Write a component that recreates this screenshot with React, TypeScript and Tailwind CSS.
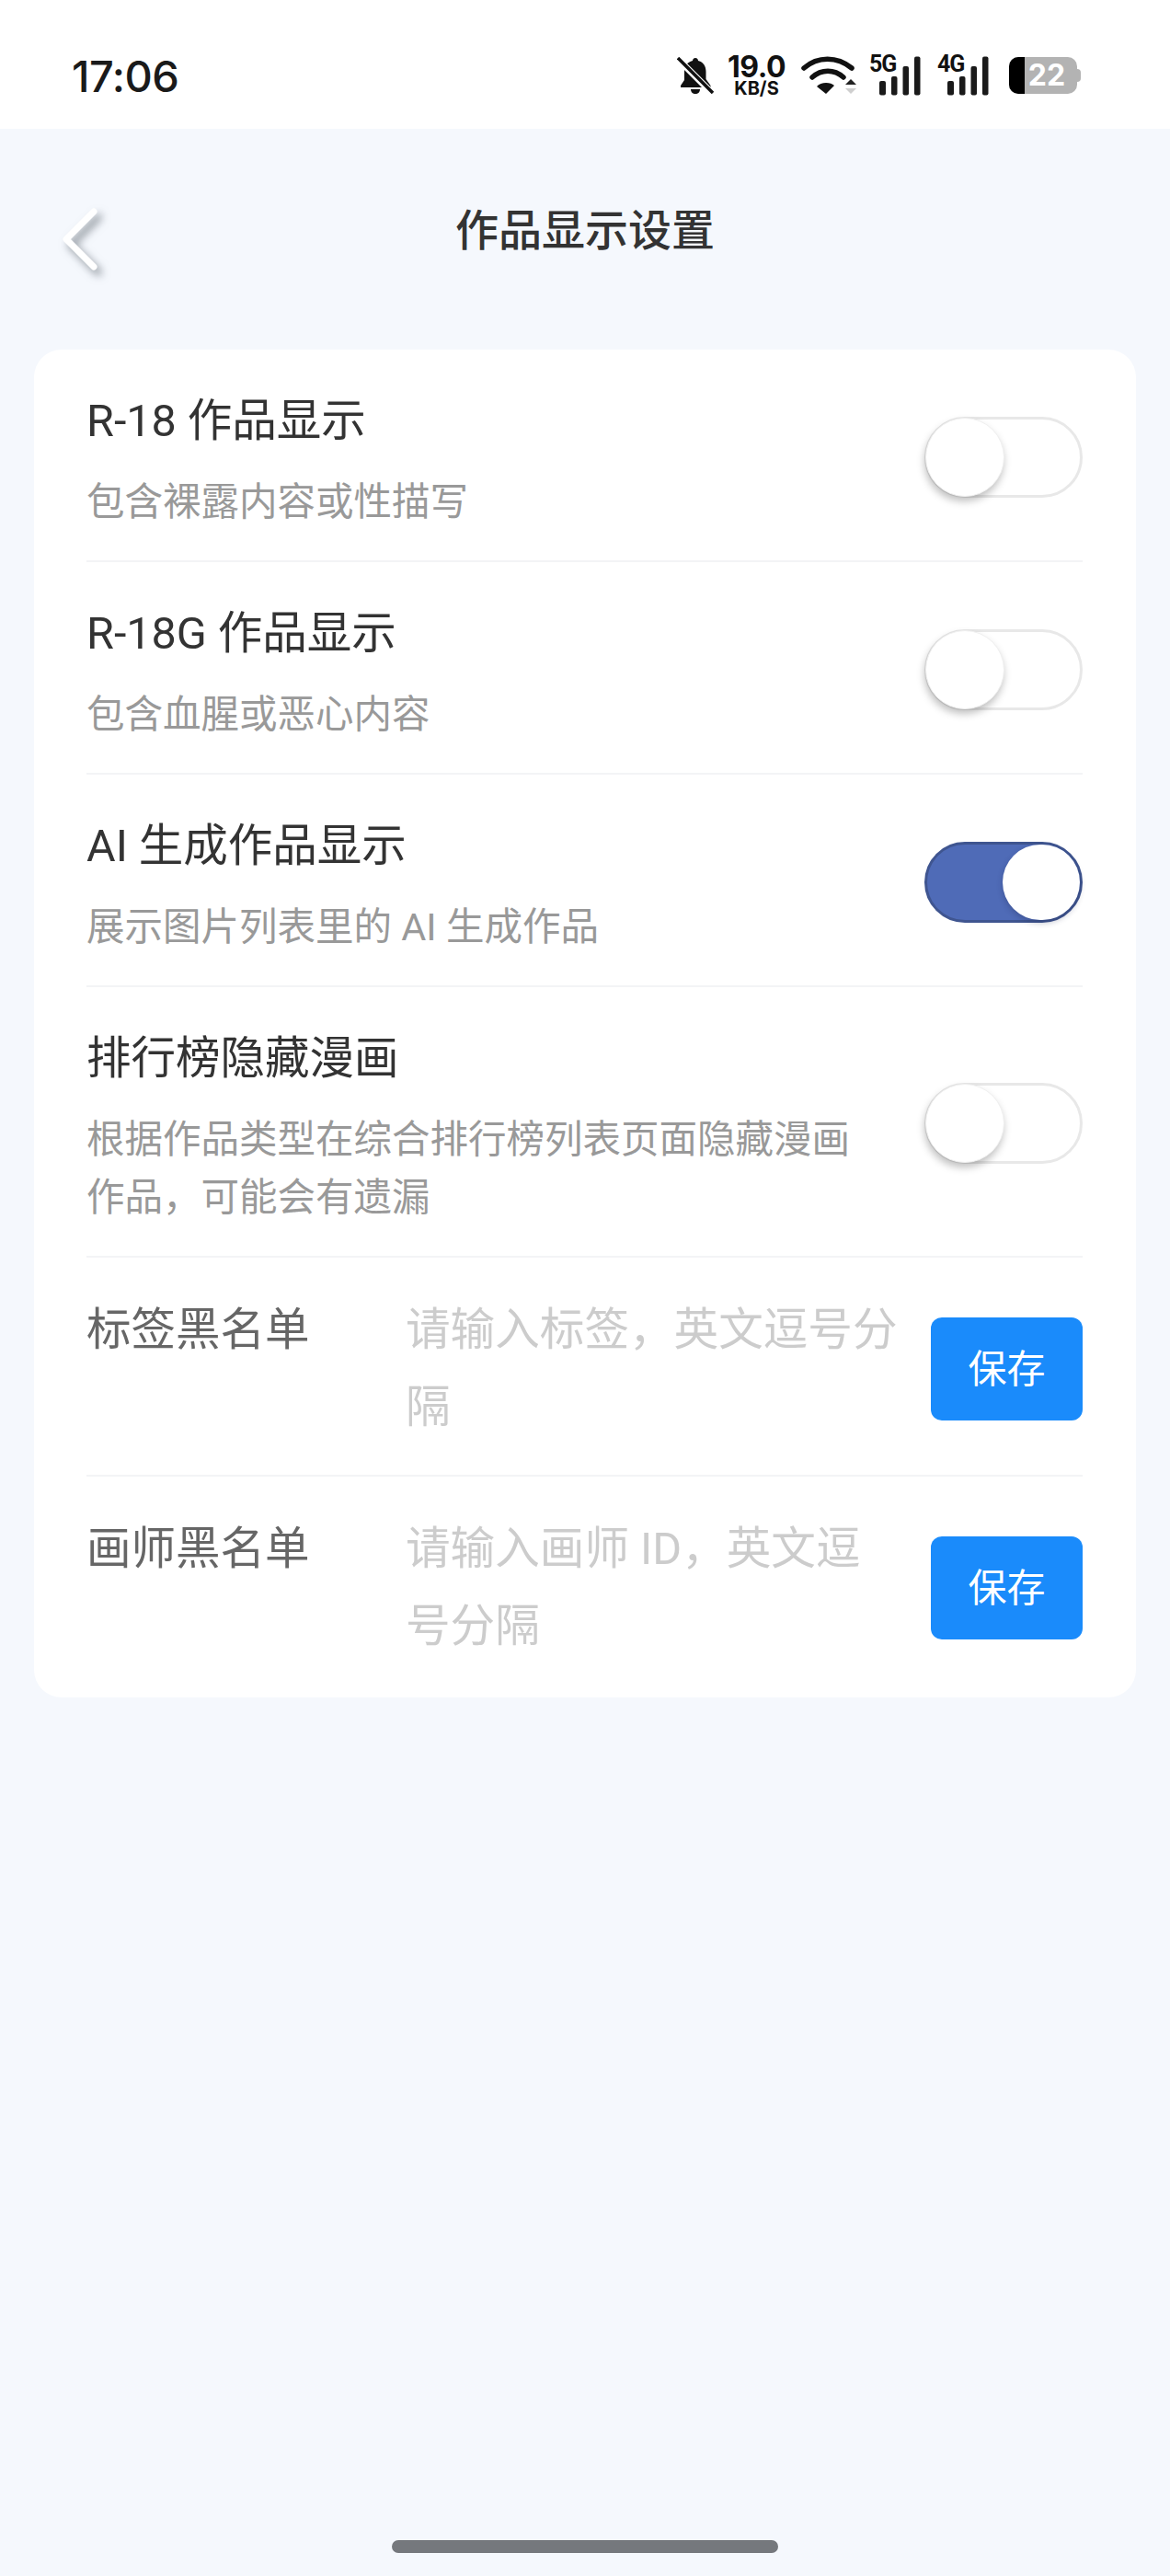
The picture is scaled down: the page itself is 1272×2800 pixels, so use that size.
import React from "react";

function Toggle({ on = false }: { on?: boolean }) {
  return (
    <div
      className={
        on
          ? "mb-[6px] flex h-[88px] w-[172px] shrink-0 items-center justify-end rounded-full border-[3px] border-[#3f5590] bg-[#4f6bb7]"
          : "mb-[6px] flex h-[88px] w-[172px] shrink-0 items-center justify-start rounded-full border-[3px] border-[#e8e8e8] bg-white"
      }
    >
      <div
        className={
          on
            ? "h-[82px] w-[84px] rounded-full bg-white shadow-[0_3px_6px_rgba(30,40,80,0.3)]"
            : "ml-[-2px] h-[86px] w-[86px] rounded-full border border-[#f0f0f0] bg-white shadow-[-1px_5px_8px_rgba(0,0,0,0.25)]"
        }
      />
    </div>
  );
}

function SwitchRow({ title, sub, on }: { title: string; sub: React.ReactNode; on?: boolean }) {
  return (
    <div className="flex items-center justify-between border-b-2 border-[#f3f4f6] pt-[42px] pb-[32px]">
      <div className="w-[860px]">
        <div className="text-[48.5px] leading-[72px] text-[#333333]">{title}</div>
        <div className="mt-[20px] text-[41.5px] leading-[63px] text-[#999999]">{sub}</div>
      </div>
      <Toggle on={on} />
    </div>
  );
}

function InputRow({ label, placeholder, last }: { label: string; placeholder: string; last?: boolean }) {
  return (
    <div className={last ? "flex items-center pt-[37px] pb-[35px]" : "flex items-center border-b-2 border-[#f3f4f6] pt-[37px] pb-[31px]"}>
      <div className="h-[168px] w-[347px] shrink-0 text-[48.5px] leading-[84px] text-[#666666]">{label}</div>
      <div className="h-[168px] w-[540px] shrink-0 text-[48.6px] leading-[84px] text-[#cccccc]">{placeholder}</div>
      <button className="ml-auto h-[112px] w-[165px] rounded-[12px] bg-[#1a8bfb] text-[42px] text-white">保存</button>
    </div>
  );
}

function Bars({ label }: { label: string }) {
  return (
    <div className="relative h-[43px] w-[56px]">
      <span className="absolute left-0 top-[-4px] font-['Roboto',sans-serif] text-[25px] font-bold leading-[26px] tracking-[-1px] text-[#111111]">{label}</span>
      <svg className="absolute left-0 top-0" width="56" height="43" viewBox="0 0 56 43" fill="#1a1a1a">
        <rect x="11" y="27" width="7" height="15.5" rx="2" />
        <rect x="24" y="22" width="6.5" height="20.5" rx="2" />
        <rect x="36.5" y="11" width="6.5" height="31.5" rx="2" />
        <rect x="49" y="0.5" width="6.5" height="42" rx="2" />
      </svg>
    </div>
  );
}

export default function App() {
  return (
    <div className="flex h-[2800px] w-[1272px] flex-col bg-[#f5f8fd] font-['Roboto','Noto_Sans_CJK_SC',sans-serif]">
      <div className="flex h-[140px] items-center justify-between bg-white pt-[24px] pl-[78px] pr-[97px]">
        <span className="font-['Inter',sans-serif] text-[47px] font-medium leading-none tracking-[-0.5px] text-[#1a1a1a]">17:06</span>
        <div className="flex items-center">
          <svg width="40" height="41" viewBox="0 0 40 41">
            <path d="M20 1c2 0 3 1.500 3 3 6 1.500 8.500 6 8.500 12v8l5 7v2H4v-2l4-6v-9c0-6 3-10.500 9-12 0-1.500 1-3 3-3z" fill="#111" />
            <path d="M15 35h10c0 3-2 5-5 5s-5-2-5-5z" fill="#111" />
            <path d="M2 3l36 36" stroke="#fff" strokeWidth="7" />
            <path d="M1 1l38 38" stroke="#111" strokeWidth="3.500" />
          </svg>
          <div className="ml-[15px] flex w-[63px] flex-col items-center font-['Inter',sans-serif] font-bold text-[#111111]">
            <span className="text-[32px] leading-[25px] tracking-[-0.5px]">19.0</span>
            <span className="mt-[3px] text-[20px] leading-[17px]">KB/S</span>
          </div>
          <svg className="ml-[17px]" width="60" height="42" viewBox="0 0 60 42" fill="none">
            <path d="M3 13C18 0 39 0 55 13" stroke="#111" strokeWidth="5.500" strokeLinecap="round" />
            <path d="M12 23C22 14 36 14 46 23" stroke="#111" strokeWidth="5.500" strokeLinecap="round" />
            <path d="M17 33c4-5 15-5 19-1l-9 9z" fill="#111" />
            <path d="M48 31l6-6 6 6z" fill="#222" />
            <path d="M48 35h12l-6 6z" fill="#cfcfcf" />
          </svg>
          <div className="ml-[14px]"><Bars label="5G" /></div>
          <div className="ml-[18px]"><Bars label="4G" /></div>
          <div className="relative ml-[22px] flex h-[40px] w-[74px] items-center justify-center overflow-hidden rounded-[10px] bg-[#b3b3b3]">
            <div className="absolute left-0 top-0 h-[40px] w-[17px] bg-black" />
            <span className="relative ml-[8px] font-['Inter',sans-serif] text-[32px] font-bold leading-none text-white">22</span>
          </div>
          <div className="h-[14px] w-[4px] rounded-r-full bg-[#b3b3b3]" />
        </div>
      </div>

      <div className="relative flex h-[224px] items-center justify-center">
        <svg className="absolute left-[64px] top-[84px] drop-shadow-[5px_6px_5px_rgba(70,80,90,0.6)]" width="48" height="72" viewBox="0 0 48 72" fill="none">
          <path d="M38 6L8 36l30 30" stroke="#ffffff" strokeWidth="7" strokeLinecap="round" strokeLinejoin="round" />
        </svg>
        <span className="mt-[-3px] text-[47px] font-medium leading-none text-[#333333]">作品显示设置</span>
      </div>

      <div className="mx-[37px] mt-[16px] rounded-[30px] bg-white pl-[57px] pr-[58px]">
        <SwitchRow title="R-18 作品显示" sub="包含裸露内容或性描写" />
        <SwitchRow title="R-18G 作品显示" sub="包含血腥或恶心内容" />
        <SwitchRow title="AI 生成作品显示" sub="展示图片列表里的 AI 生成作品" on />
        <SwitchRow title="排行榜隐藏漫画" sub="根据作品类型在综合排行榜列表页面隐藏漫画作品，可能会有遗漏" />
        <InputRow label="标签黑名单" placeholder="请输入标签，英文逗号分隔" />
        <InputRow label="画师黑名单" placeholder="请输入画师 ID，英文逗号分隔" last />
      </div>

      <div className="mx-auto mt-auto mb-[25px] h-[14px] w-[420px] rounded-full bg-[#75787d]" />
    </div>
  );
}
